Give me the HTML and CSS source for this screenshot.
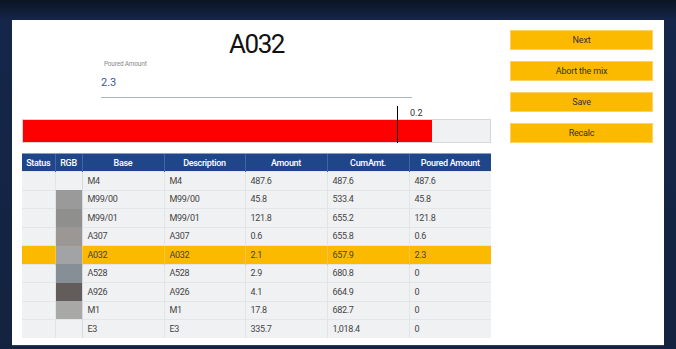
FILE: index.html
```html
<!DOCTYPE html>
<html lang="en">
<head>
    <meta charset="UTF-8">
    <meta name="viewport" content="width=device-width, initial-scale=1.0">
    <title>Mix - A032</title>
    <link rel="stylesheet" href="styles.css">
</head>
<body>
    <div class="panel">
        <div class="main">
            <h1 class="title">A032</h1>

            <div class="field">
                <label class="field-label">Poured Amount</label>
                <div class="field-value">2.3</div>
            </div>

            <div class="gauge">
                <span class="gauge-label" style="left: 388px;">0.2</span>
                <span class="gauge-marker" style="left: 375px;"></span>
                <div class="bar">
                    <div class="bar-fill" style="width: 87.6%;"></div>
                </div>
            </div>

            <table class="grid">
                <colgroup>
                    <col style="width: 33px;">
                    <col style="width: 27px;">
                    <col style="width: 82px;">
                    <col style="width: 81px;">
                    <col style="width: 82px;">
                    <col style="width: 82px;">
                    <col style="width: 82px;">
                </colgroup>
                <thead>
                    <tr>
                        <th>Status</th>
                        <th>RGB</th>
                        <th>Base</th>
                        <th>Description</th>
                        <th>Amount</th>
                        <th>CumAmt.</th>
                        <th>Poured Amount</th>
                    </tr>
                </thead>
                <tbody>
                    <tr>
                        <td></td><td></td>
                        <td>M4</td><td>M4</td><td>487.6</td><td>487.6</td><td>487.6</td>
                    </tr>
                    <tr>
                        <td></td><td class="swatch" style="background: #9a9a9a;"></td>
                        <td>M99/00</td><td>M99/00</td><td>45.8</td><td>533.4</td><td>45.8</td>
                    </tr>
                    <tr>
                        <td></td><td class="swatch" style="background: #8f8f8d;"></td>
                        <td>M99/01</td><td>M99/01</td><td>121.8</td><td>655.2</td><td>121.8</td>
                    </tr>
                    <tr>
                        <td></td><td class="swatch" style="background: #9b9794;"></td>
                        <td>A307</td><td>A307</td><td>0.6</td><td>655.8</td><td>0.6</td>
                    </tr>
                    <tr class="current">
                        <td></td><td class="swatch" style="background: #a2a3a4;"></td>
                        <td>A032</td><td>A032</td><td>2.1</td><td>657.9</td><td>2.3</td>
                    </tr>
                    <tr>
                        <td></td><td class="swatch" style="background: #868f95;"></td>
                        <td>A528</td><td>A528</td><td>2.9</td><td>680.8</td><td>0</td>
                    </tr>
                    <tr>
                        <td></td><td class="swatch" style="background: #625d5a;"></td>
                        <td>A926</td><td>A926</td><td>4.1</td><td>664.9</td><td>0</td>
                    </tr>
                    <tr>
                        <td></td><td class="swatch" style="background: #a8a8a6;"></td>
                        <td>M1</td><td>M1</td><td>17.8</td><td>682.7</td><td>0</td>
                    </tr>
                    <tr>
                        <td></td><td></td>
                        <td>E3</td><td>E3</td><td>335.7</td><td>1,018.4</td><td>0</td>
                    </tr>
                </tbody>
            </table>
        </div>

        <div class="side">
            <button class="btn">Next</button>
            <button class="btn">Abort the mix</button>
            <button class="btn">Save</button>
            <button class="btn">Recalc</button>
        </div>
    </div>
</body>
</html>
```

FILE: styles.css
```css
html, body {
    height: 100%;
}
body {
    margin: 0;
    overflow: hidden;
    font-family: Roboto, "Liberation Sans", sans-serif;
    background: linear-gradient(to bottom, #0c1422 0, #14264a 20px, #13233f 100%);
}
.panel {
    display: flex;
    width: 652px;
    height: 325px;
    margin: 20px 0 0 12px;
    background: #fff;
    box-shadow: 0 1px 0 #2b3d5e;
}
.main {
    width: 469px;
    padding-left: 10px;
}
.title {
    margin: 0;
    padding-top: 9px;
    height: 31px;
    text-align: center;
    font-size: 26px;
    font-weight: 400;
    letter-spacing: -1.5px;
    line-height: 31px;
    color: #111;
}
.field {
    width: 311px;
    margin-left: 79px;
    border-bottom: 1px solid #a9b5c4;
}
.field-label {
    display: block;
    font-size: 6.5px;
    color: #8a8a8a;
    letter-spacing: -0.2px;
    line-height: 9px;
    padding-left: 3px;
}
.field-value {
    font-size: 11px;
    color: #3a5a96;
    line-height: 14px;
    padding: 7px 0 7px;
}
.gauge {
    position: relative;
    padding-top: 21px;
}
.gauge-label {
    position: absolute;
    top: 10px;
    font-size: 9px;
    color: #333;
    line-height: 10px;
}
.gauge-marker {
    position: absolute;
    top: 8px;
    width: 1px;
    height: 37px;
    background: #000;
    z-index: 1;
}
.bar {
    height: 22px;
    border: 1px solid #d6d6d6;
    background: #f0f1f3;
}
.bar-fill {
    height: 100%;
    background: #ff0000;
}
.grid {
    width: 469px;
    margin-top: 10px;
    border-collapse: collapse;
    table-layout: fixed;
    font-size: 9px;
    line-height: 10px;
    letter-spacing: -0.3px;
}
.grid th {
    height: 17px;
    padding: 0;
    background: #1f4689;
    color: #fff;
    font-weight: 500;
    text-align: center;
    border-top: 1px solid #8a9ec0;
    border-left: 1px solid #4266a3;
}
.grid th:first-child {
    border-left: none;
}
.grid td {
    height: 17.5px;
    padding: 0 0 0 5px;
    background: #f0f1f3;
    color: #444;
    border-left: 1px solid #e3e4e6;
    border-top: 1px solid #e4e5e7;
    white-space: nowrap;
}
.grid td:first-child {
    border-left: none;
}
.grid td:nth-child(3) {
    border-left-color: #d8d9dc;
}
.grid td.swatch {
    padding: 0;
    border-top: none;
}
.grid tr.current td {
    background: #fbb900;
    border-left-color: #f6c640;
    color: #444;
}
.grid tr.current td.swatch {
    background: #a2a3a4;
}
.side {
    width: 143px;
    padding: 10px 0 0 19px;
    display: flex;
    flex-direction: column;
    gap: 11px;
}
.btn {
    height: 20px;
    padding: 0;
    border: 1px solid #fcd262;
    background: #fbb900;
    color: #333;
    font-family: Roboto, "Liberation Sans", sans-serif;
    font-size: 9px;
    letter-spacing: -0.2px;
    cursor: pointer;
}
```
